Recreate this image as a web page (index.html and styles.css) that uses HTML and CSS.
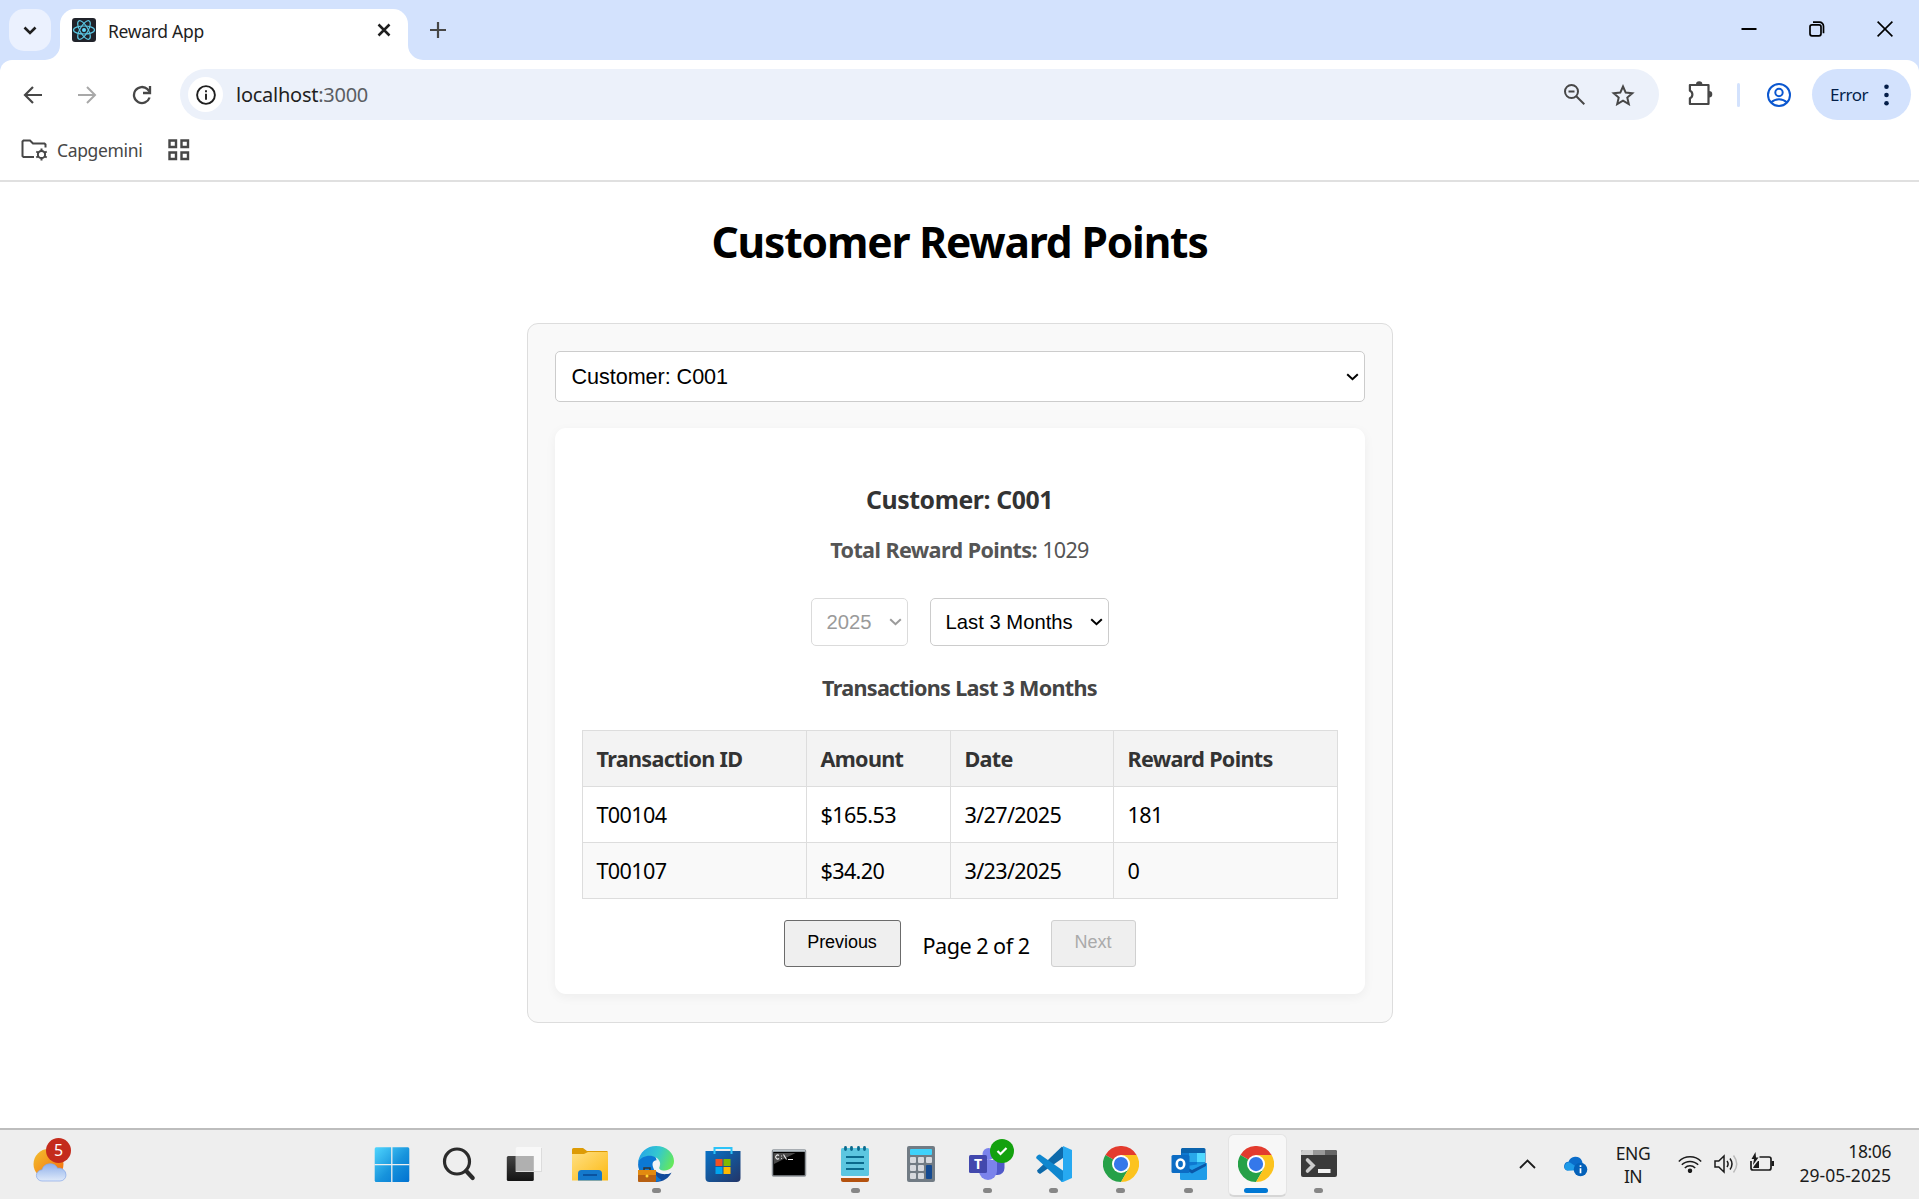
FILE: index.html
```
<!DOCTYPE html>
<html lang="en">
<head>
<meta charset="utf-8">
<title>Reward App</title>
<link rel="stylesheet" href="styles.css">
</head>
<body>
<div class="screen">
  <header class="browser">
    <div class="tabstrip">
      <div class="tab-search"><svg width="14" height="9" viewBox="0 0 14 9"><path d="M1.5 1.5 7 7l5.500-5.500" fill="none" stroke="#1f1f1f" stroke-width="2.600"/></svg></div>
      <svg class="tab-foot" width="15" height="15" viewBox="0 0 15 15"><path d="M15 0v15H0A15 15 0 0 0 15 0z" fill="#fff"/></svg>
      <div class="tab">
        <svg width="24" height="24" viewBox="0 0 24 24"><rect width="24" height="24" rx="3" fill="#20232a"/><g fill="none" stroke="#5bc8e4" stroke-width="1.200"><ellipse cx="12" cy="12" rx="10.500" ry="4"/><ellipse cx="12" cy="12" rx="10.500" ry="4" transform="rotate(60 12 12)"/><ellipse cx="12" cy="12" rx="10.500" ry="4" transform="rotate(120 12 12)"/></g><circle cx="12" cy="12" r="2" fill="#61dafb"/></svg>
        <span class="tab-title">Reward App</span>
        <svg width="14" height="14" viewBox="0 0 14 14"><path d="M1.500 1.500l11 11M12.500 1.500l-11 11" stroke="#1f1f1f" stroke-width="2.500"/></svg>
      </div>
      <svg class="tab-foot" width="15" height="15" viewBox="0 0 15 15"><path d="M0 0v15h15A15 15 0 0 1 0 0z" fill="#fff"/></svg>
      <svg class="new-tab" width="16" height="16" viewBox="0 0 16 16"><path d="M8 0v16M0 8h16" stroke="#474747" stroke-width="2.200"/></svg>
      <div class="window-buttons">
        <svg width="16" height="16" viewBox="0 0 16 16"><path d="M0.500 8h15" stroke="#000" stroke-width="2"/></svg>
        <svg width="16" height="16" viewBox="0 0 16 16" fill="none" stroke="#000" stroke-width="1.700"><rect x="1" y="3.800" width="11" height="11" rx="2"/><path d="M4 1.200h6.500a4 4 0 0 1 4 4v7"/></svg>
        <svg width="16" height="16" viewBox="0 0 16 16"><path d="M.6.6l14.800 14.800M15.400.6L.6 15.400" stroke="#000" stroke-width="1.600"/></svg>
      </div>
    </div>
    <div class="toolbar">
      <svg class="back" width="19" height="18" viewBox="0 0 19 18" fill="none" stroke="#474747" stroke-width="2.200"><path d="M19 9H2.500M10 1L2 9l8 8"/></svg>
      <svg class="forward" width="19" height="18" viewBox="0 0 19 18" fill="none" stroke="#a8a8a8" stroke-width="2"><path d="M0 9h16.500M9 1l8 8-8 8"/></svg>
      <svg class="reload" width="20" height="20" viewBox="0 0 20 20" fill="none" stroke="#474747" stroke-width="2.300"><path d="M17.600 12.500A8 8 0 1 1 15.500 4.200L17.500 6.500"/><path d="M18 1v7h-7"/></svg>
      <div class="omnibox">
        <div class="site-info"><svg width="20" height="20" viewBox="0 0 20 20"><circle cx="10" cy="10" r="8.900" fill="none" stroke="#1f1f1f" stroke-width="1.900"/><path d="M10 8.700v6M10 5.300v2" stroke="#1f1f1f" stroke-width="1.900"/></svg></div>
        <span class="url"><span class="host">localhost</span>:3000</span>
        <svg class="zoom-icon" width="21" height="21" viewBox="0 0 21 21" fill="none" stroke="#474747" stroke-width="2"><circle cx="7.500" cy="7.500" r="6.500"/><path d="M4.500 7.500h6M12.300 12.300l8 8"/></svg>
        <svg width="24" height="22" viewBox="0 0 24 22" fill="none" stroke="#474747" stroke-width="2"><path d="M12 2.500l2.700 6.100 6.600.6-5 4.400 1.500 6.500L12 16.700l-5.800 3.400 1.500-6.500-5-4.400 6.600-.6z"/></svg>
      </div>
      <svg class="extensions" width="25" height="25" viewBox="0 0 25 25"><path d="M4 4h16.500v19H1.900v-5.800a4 4 0 0 0 0-7.400V4z" fill="none" stroke="#474747" stroke-width="2.200" stroke-linejoin="round"/><path d="M8 3.500a3.200 3.200 0 0 1 6.400 0zM21 10a3.200 3.200 0 0 1 0 6.600z" fill="#474747"/></svg>
      <span class="divider"></span>
      <svg class="profile" width="24" height="24" viewBox="0 0 24 24" fill="none" stroke="#0b57d0" stroke-width="2"><circle cx="12" cy="12" r="11"/><circle cx="12" cy="9.500" r="3.700"/><path d="M4 19.500c4.500-4.300 11.500-4.300 16 0"/></svg>
      <div class="error-chip"><span>Error</span><svg width="5" height="22" viewBox="0 0 5 22" fill="#041e49"><circle cx="2.500" cy="2.700" r="2.300"/><circle cx="2.500" cy="11" r="2.300"/><circle cx="2.500" cy="19.300" r="2.300"/></svg></div>
    </div>
    <div class="bookmarks">
      <svg width="27" height="22" viewBox="0 0 27 22" fill="none" stroke="#474747" stroke-width="2"><path d="M13 18H2.500L1.500 17V2.500l1-1H9l3 3h11.500l1 1v3"/><circle cx="20.500" cy="15.500" r="3.600"/><path d="M20.500 9.500v2.500M20.500 19v2.500M15.300 12.500l2.200 1.300M23.500 17.200l2.200 1.300M15.300 18.500l2.200-1.300M23.500 13.800l2.200-1.300"/></svg>
      <span class="bookmark-name">Capgemini</span>
      <svg width="22" height="22" viewBox="0 0 22 22" fill="none" stroke="#474747" stroke-width="2.400"><path d="M1.500 1.500h6.500V8H1.500zM13.500 1.500H20V8h-6.500zM1.500 13.500h6.500V20H1.500zM13.500 13.500H20V20h-6.500z"/></svg>
    </div>
  </header>

  <main class="page">
    <h1>Customer Reward Points</h1>
    <section class="container">
      <div class="select customer-select"><span>Customer: C001</span><svg width="13" height="8" viewBox="0 0 13 8"><path d="M1.200 1.200l5.300 5 5.300-5" fill="none" stroke="currentColor" stroke-width="2"/></svg></div>
      <article class="card">
        <h3>Customer: C001</h3>
        <p class="total"><strong>Total Reward Points:</strong> <span class="num">1029</span></p>
        <div class="filters">
          <div class="select year disabled"><span>2025</span><svg width="13" height="8" viewBox="0 0 13 8"><path d="M1.200 1.200l5.300 5 5.300-5" fill="none" stroke="currentColor" stroke-width="2"/></svg></div>
          <div class="select range"><span>Last 3 Months</span><svg width="13" height="8" viewBox="0 0 13 8"><path d="M1.200 1.200l5.300 5 5.300-5" fill="none" stroke="currentColor" stroke-width="2"/></svg></div>
        </div>
        <h4>Transactions Last 3 Months</h4>
        <table>
          <colgroup><col class="c-id"><col class="c-amount"><col class="c-date"><col class="c-points"></colgroup>
          <thead><tr><th>Transaction ID</th><th>Amount</th><th>Date</th><th>Reward Points</th></tr></thead>
          <tbody>
            <tr><td>T00104</td><td>$165.53</td><td>3/27/2025</td><td>181</td></tr>
            <tr><td>T00107</td><td>$34.20</td><td>3/23/2025</td><td>0</td></tr>
          </tbody>
        </table>
        <div class="pagination">
          <button class="prev">Previous</button>
          <span>Page 2 of 2</span>
          <button class="next" disabled>Next</button>
        </div>
      </article>
    </section>
  </main>

  <footer class="taskbar">
    <div class="weather">
      <svg width="40" height="44" viewBox="0 0 40 44">
        <defs>
          <linearGradient id="sun" x1="0" y1="0" x2="1" y2="1"><stop offset="0" stop-color="#f2c12e"/><stop offset="1" stop-color="#f5680c"/></linearGradient>
          <linearGradient id="cloud" x1="0" y1="0" x2="0" y2="1"><stop offset="0" stop-color="#8fb0ea"/><stop offset="1" stop-color="#dfeafa"/></linearGradient>
        </defs>
        <circle cx="15.500" cy="26" r="15" fill="url(#sun)"/>
        <path d="M9 43a5.600 5.600 0 0 1 0-11.200 8.500 8.500 0 0 1 15.600-1.600A7 7 0 0 1 33 37a6 6 0 0 1-6 6z" fill="url(#cloud)" stroke="#86a8e8" stroke-width=".7"/>
      </svg>
      <span class="badge">5</span>
    </div>
    <nav class="apps">
      <div class="app"><svg width="36" height="36" viewBox="0 0 36 36"><defs><linearGradient id="win" x1="0" y1="0" x2="1" y2="1"><stop offset="0" stop-color="#4fd5fd"/><stop offset=".55" stop-color="#1793dc"/><stop offset="1" stop-color="#0072d1"/></linearGradient></defs><rect x=".7" y="1.300" width="34.600" height="34.600" rx="1.500" fill="url(#win)"/><path d="M17.800 1v35M.5 18.600h35" stroke="#eee" stroke-width="1.300"/></svg></div>
      <div class="app"><svg width="36" height="36" viewBox="-1.200 0 36 36" fill="none" stroke="#2b2b2b"><circle cx="15.800" cy="15.500" r="12.500" stroke-width="3.200"/><path d="M25 25l6.500 7" stroke-width="4.200" stroke-linecap="round"/></svg></div>
      <div class="app"><svg width="36" height="36" viewBox="-.8 0 36 36"><defs><linearGradient id="tv" x1="0" y1="0" x2="0" y2="1"><stop offset="0" stop-color="#444"/><stop offset="1" stop-color="#141414"/></linearGradient></defs><rect y="10" width="27" height="25" rx="1.500" fill="url(#tv)"/><rect x="9" y="1" width="26" height="25" rx="1.500" fill="#f8f8f8"/><path d="M9 10h18v16H9z" fill="#b0b0b0"/><path d="M9 25.500h26M34.700 2v24" stroke="#dcdcdc"/></svg></div>
      <div class="app"><svg width="36" height="36" viewBox="0 0 36 36"><defs><linearGradient id="fold" x1="0" y1="0" x2="1" y2="1"><stop offset="0" stop-color="#ffe083"/><stop offset="1" stop-color="#fcb912"/></linearGradient></defs><path d="M0 3.500Q0 2 1.500 2H11l4 3h20.500L36 20H0z" fill="#dd9b05"/><path d="M0 8h12l4-2h20v28.500H0z" fill="url(#fold)"/><path d="M6 34.500v-7a3.500 3.500 0 0 1 3.500-3.500h17a3.500 3.500 0 0 1 3.500 3.500v7z" fill="#1479cc"/><path d="M11 29h14" stroke="#0a53a0" stroke-width="2"/></svg></div>
      <div class="app"><svg width="36" height="36" viewBox="0 0 36 36"><defs><linearGradient id="edgeTop" x1="0" y1=".3" x2="1" y2=".6"><stop offset="0" stop-color="#25a5e8"/><stop offset=".5" stop-color="#34c8cf"/><stop offset="1" stop-color="#65e85a"/></linearGradient></defs><path d="M.5 18a17.800 17.800 0 0 0 17.500 18c7 0 13-4 15.500-9.500-4 2.500-10 2-14-1.500z" fill="#114a9b"/><path d="M.2 18C0 10 6 7.500 11 8c6 .6 8 4 7.500 8-5 4-3 13 5 18-13 6-23.500-5-23.300-16z" fill="#0c78d4"/><path d="M.2 16C1.500 6 9 0 18 0c11 0 18 7.500 18 15 0 6-4.500 9.500-9.500 9.500-4 0-6-1.500-5-3.500 1.300-2.500 1-7-3.500-9.500C12 8 3.500 10 .2 16z" fill="url(#edgeTop)"/><path d="M14.500 18c0-4 6.500-5.500 7-1 .3 2-1.500 3-.5 5.500 1.500 3.500 7 4 12.500 2-.5 4-8 4.500-12.500 2.500-4-1.800-6.500-5-6.500-9z" fill="#f4f5f6"/><rect y="24" width="18" height="12" rx="1" fill="#b76012"/><path d="M0 24h18v5H0z" fill="#e28a10"/><path d="M6 24v-2h6v2" fill="none" stroke="#333" stroke-width="1.500"/><circle cx="9" cy="30" r="1.500" fill="#ffd735"/></svg><i></i></div>
      <div class="app"><svg width="36" height="36" viewBox="0 0 36 36"><defs><linearGradient id="store" x1="0" y1="0" x2="1" y2="1"><stop offset="0" stop-color="#0872c6"/><stop offset="1" stop-color="#233567"/></linearGradient></defs><path d="M.5 5h35v27a4 4 0 0 1-4 4h-27a4 4 0 0 1-4-4z" fill="url(#store)"/><path d="M9.500 8V2h17v6" fill="none" stroke="#2cc3f8" stroke-width="2"/><path d="M10.500 13h7v7h-7z" fill="#f25022"/><path d="M18.500 13h7v7h-7z" fill="#7fba00"/><path d="M10.500 21h7v7h-7z" fill="#00a4ef"/><path d="M18.500 21h7v7h-7z" fill="#ffb900"/></svg></div>
      <div class="app"><svg width="36" height="36" viewBox="0 0 36 36"><rect x="1.500" y="4" width="33" height="26" rx="1" fill="#000" stroke="#8d9298" stroke-width="1.500"/><path d="M2 4.800h32" stroke="#b8c2c8" stroke-width="2"/><path d="M2.500 7h22L3 18z" fill="#4a4a4a"/><path d="M8 9.500a2 2 0 1 0 0 3M10 10h.8M10 12.500h.8M12.500 8.500l3 5M17 13.500h5" fill="none" stroke="#eee" stroke-width="1.100"/></svg></div>
      <div class="app"><svg width="36" height="36" viewBox="0 0 36 36"><path d="M4 31h28v3a2 2 0 0 1-2 2H6a2 2 0 0 1-2-2z" fill="#b4520e"/><path d="M4 29h28v3H4z" fill="#f4f4f4"/><rect x="4" y="2" width="28" height="28" rx="1.500" fill="#5cc6e0"/><path d="M9 11h18M9 17h18M9 23h18" stroke="#0b6a8d" stroke-width="2"/><path d="M8.500 1.500v2M14.500 1.500v2M21.500 1.500v2M27.500 1.500v2" stroke="#0b6a8d" stroke-width="2.800" stroke-linecap="round"/></svg><i></i></div>
      <div class="app"><svg width="36" height="36" viewBox="0 0 36 36"><rect x="4" width="28" height="36" rx="2" fill="#717b84"/><rect x="7" y="3" width="22" height="6" rx="1" fill="#3fd2fb"/><g fill="#d6d9de"><rect x="7" y="11" width="6" height="6" rx="1"/><rect x="15" y="11" width="6" height="6" rx="1"/><rect x="23" y="11" width="6" height="6" rx="1"/><rect x="7" y="19" width="6" height="6" rx="1"/><rect x="15" y="19" width="6" height="6" rx="1"/><rect x="7" y="27" width="6" height="6" rx="1"/><rect x="15" y="27" width="6" height="6" rx="1"/></g><rect x="23" y="19" width="6" height="14" rx="1" fill="#144a91"/></svg></div>
      <div class="app"><svg width="36" height="36" viewBox="0 0 36 36"><circle cx="29" cy="11" r="5" fill="#5059c9"/><path d="M22 15h13.500v7a7 7 0 0 1-7 7H22z" fill="#5059c9"/><circle cx="19.500" cy="8" r="6" fill="#7b83eb"/><path d="M10 14h18v11a9 9 0 0 1-18 0z" fill="#7b83eb"/><rect y="9" width="18" height="18" rx="1.500" fill="#4248ad"/><text x="9" y="23" text-anchor="middle" font-family="Noto Sans, sans-serif" font-weight="700" font-size="14" fill="#fff">T</text></svg><svg class="presence" width="24" height="24" viewBox="0 0 24 24"><circle cx="12" cy="12" r="12" fill="#13a10e"/><path d="M7.500 12l3 3 6-6" fill="none" stroke="#fff" stroke-width="2.200"/></svg><i></i></div>
      <div class="app"><svg width="36" height="36" viewBox="0 0 36 36"><path d="M1 24.500L26 .5l3 3v7L4 28q-3-1.500-3-3.500z" fill="#0d69aa"/><path d="M4 8.500q-3 0-4 3.500l26 24 3-3v-7z" fill="#0f87cf"/><path d="M27 0l9 4v28l-9 4q-1 .5-2-1l2-1z" fill="#27a9f1"/></svg><i></i></div>
      <div class="app wide"><svg width="36" height="36" viewBox="0 0 48 48"><path d="M24 24L3.200 12A24 24 0 0 1 44.800 12z" fill="#e33b2e"/><path d="M24 24L3.200 12A24 24 0 0 0 24 48L34.400 30z" fill="#26a148"/><path d="M24 12h20.800A24 24 0 0 1 24 48l10.400-18z" fill="#fcc31e"/><circle cx="24" cy="24" r="12" fill="#fff"/><circle cx="24" cy="24" r="9.500" fill="#3578ea"/></svg><i></i></div>
      <div class="app wide"><svg width="36" height="36" viewBox="0 0 36 36"><path d="M11 2h22q1.500 0 1.500 1.500V28H10V3z" fill="#0a63ad"/><path d="M10.500 7H18v9h-7.500zM18 16h8v8h-8z" fill="#0e78d0"/><path d="M18 7h8v9h-8z" fill="#28a8ea"/><path d="M26 7h8v9h-8z" fill="#50d9ff"/><path d="M26 16h8v8h-8z" fill="#1793db"/><path d="M9 21l27-4v15.500q0 1.500-1.500 1.500h-24Q9 34 9 32.500z" fill="#1f9ce8"/><path d="M35 17v3L21 27.500 10 21v-3l11 6z" fill="#0a57a8"/><rect x=".5" y="9" width="18" height="18" rx="1.500" fill="#0c6cc4"/><ellipse cx="9.500" cy="18" rx="3.700" ry="4.500" fill="none" stroke="#fff" stroke-width="2.600"/></svg><i></i></div>
      <div class="app active"><svg width="36" height="36" viewBox="0 0 48 48"><path d="M24 24L3.200 12A24 24 0 0 1 44.800 12z" fill="#e33b2e"/><path d="M24 24L3.200 12A24 24 0 0 0 24 48L34.400 30z" fill="#26a148"/><path d="M24 12h20.800A24 24 0 0 1 24 48l10.400-18z" fill="#fcc31e"/><circle cx="24" cy="24" r="12" fill="#fff"/><circle cx="24" cy="24" r="9.500" fill="#3578ea"/></svg><i></i></div>
      <div class="app narrow"><svg width="36" height="36" viewBox="0 0 36 36"><rect y="4" width="36" height="27" rx="2" fill="#3a3a3a"/><path d="M2 4h10v5H0V6q0-2 2-2z" fill="#ccc"/><path d="M12 4h12v5H12z" fill="#999"/><path d="M24 4h10q2 0 2 2v3H24z" fill="#666"/><path d="M6.500 14l5.500 5.500L6.500 25" fill="none" stroke="#ccc" stroke-width="3.600" stroke-linecap="round"/><path d="M17 23h12.500v4H17z" fill="#f2f2f2"/></svg><i></i></div>
    </nav>
    <div class="tray">
      <svg class="chevron" width="17" height="10" viewBox="0 0 17 10"><path d="M1 9l7.500-7.500L16 9" fill="none" stroke="#1b1b1b" stroke-width="1.800"/></svg>
      <svg class="onedrive" width="25" height="21" viewBox="0 0 25 21"><path d="M4 14.500a4.500 4.500 0 0 1 1.500-8.700A7.300 7.300 0 0 1 19 5l2 8z" fill="#0a6cc9"/><path d="M4 14.500a4.300 4.300 0 0 1 3-8l12 8z" fill="#1e9be8"/><circle cx="17.500" cy="13.500" r="6.800" fill="#0461b9"/><path d="M17.500 12.300v5M17.500 9.300v1.800" stroke="#fff" stroke-width="1.700"/></svg>
      <div class="lang"><span>ENG</span><span>IN</span></div>
      <svg class="wifi" width="24" height="18" viewBox="0 0 24 18" fill="none" stroke="#1b1b1b" stroke-width="1.500"><path d="M.8 6.500a15.800 15.800 0 0 1 22.400 0M3.800 9.800a11.600 11.600 0 0 1 16.400 0M6.800 13a7.400 7.400 0 0 1 10.400 0"/><circle cx="12" cy="15.800" r="1.500" fill="#1b1b1b"/></svg>
      <svg class="volume" width="24" height="20" viewBox="0 0 24 20" fill="none" stroke="#1b1b1b" stroke-width="1.500"><path d="M1 7h3.800L10 2v16l-5.200-5H1z"/><path d="M13 7q2.200 3 0 6M16 4.500q4 5.500 0 11"/><path d="M19.500 1.500q6.500 8.500 0 17" stroke="#bbb"/></svg>
      <svg class="battery" width="25" height="21" viewBox="0 0 25 21" fill="none" stroke="#1b1b1b" stroke-width="1.700"><path d="M9.500 5H19a2 2 0 0 1 2 2v9a2 2 0 0 1-2 2H3a2 2 0 0 1-2-2V9"/><path d="M21.500 9h2.500v5h-2.500z" fill="#1b1b1b" stroke="none"/><path d="M5.500 0L1.500 7H4l-1 6 5.500-7.500H6z" fill="#1b1b1b" stroke="none"/><path d="M3 16l1-2 4-5h1v7z" fill="#1b1b1b" stroke="none"/></svg>
      <div class="clock"><span class="time">18:06</span><span>29-05-2025</span></div>
    </div>
  </footer>
</div>
</body>
</html>
```

FILE: styles.css
```
* { box-sizing: border-box; }
body { margin: 0; background: #fff; font-family: "Noto Sans", sans-serif; }
svg { display: block; flex: none; }
.screen { width: 1919px; height: 1199px; display: flex; flex-direction: column; overflow: hidden; }

/* Browser chrome */
.browser { height: 182px; background: #d3e2fd; border-bottom: 2px solid #e0e0e0; flex: none; }
.tabstrip { height: 60px; display: flex; padding-left: 9px; }
.tab-search { width: 42px; height: 42px; margin-top: 9px; margin-right: -6px; border-radius: 15px; background: #ebf1fe; display: flex; align-items: center; justify-content: center; }
.tab-foot { align-self: flex-end; }
.tab { width: 348px; margin-top: 9px; background: #fff; border-radius: 15px 15px 0 0; display: flex; align-items: flex-start; padding: 9px 17px 0 12px; }
.tab-title { margin: 0 auto 0 12px; font-size: 17.500px; line-height: 26px; letter-spacing: -.300px; color: #1f1f1f; }
.tab > svg:last-child { margin-top: 5px; }
.new-tab { margin: 22px 0 0 7px; }
.window-buttons { margin: 21px 26px 0 auto; display: flex; gap: 52px; }
.toolbar { height: 69px; background: #fff; border-radius: 12px 12px 0 0; display: flex; align-items: center; padding: 0 8px 0 23px; }
.forward { margin-left: 36px; }
.reload { margin-left: 35px; }
.omnibox { width: 1479px; height: 51px; margin-left: 28px; border-radius: 26px; background: #ecf1fa; display: flex; align-items: center; padding: 0 24px 0 8px; }
.site-info { width: 35px; height: 35px; border-radius: 50%; background: #fff; display: flex; align-items: center; justify-content: center; }
.url { margin: -1px auto 0 13px; font-size: 20px; letter-spacing: -.260px; color: #5b5e63; }
.host { color: #1f1f1f; }
.zoom-icon { margin-right: 26px; }
.extensions { margin-left: 29px; margin-top: -3px; }
.divider { width: 3px; height: 24px; margin-left: 24px; border-radius: 2px; background: #d3e2fd; }
.profile { margin-left: 27px; }
.error-chip { width: 99px; height: 51px; margin-left: auto; border-radius: 26px; background: #d3e2fd; color: #041e49; font-size: 17px; letter-spacing: -.500px; display: flex; align-items: center; justify-content: space-between; padding: 0 22px 0 18px; }
.error-chip span { margin-top: -1px; }
.bookmarks { height: 51px; background: #fff; display: flex; align-items: center; padding: 0 0 9px 21px; }
.bookmark-name { margin: -1px 26px 0 9px; font-size: 17.500px; letter-spacing: -.350px; color: #474747; width: 85px; }

/* Reward page */
.page { height: 946px; flex: none; display: flex; flex-direction: column; align-items: center; }
h1 { margin: 30px 0 51px; font-size: 42.500px; line-height: 60px; letter-spacing: -1.150px; }
.container { width: 866px; height: 700px; padding: 27px; border: 1px solid #ddd; border-radius: 11px; background: #f9f9f9; }
.select { display: flex; align-items: center; justify-content: space-between; border: 1px solid #ccc; border-radius: 5px; background: #fff; font: 21.600px "Liberation Sans", sans-serif; color: #000; }
.customer-select { height: 51px; padding: 0 5px 0 16px; letter-spacing: -.050px; }
.card { height: 566px; margin-top: 26px; padding: 54px 27px 0; border-radius: 11px; background: #fff; box-shadow: 0 3px 11px rgba(0,0,0,.05); text-align: center; }
h3 { margin: 0; font-size: 24.800px; line-height: 34px; letter-spacing: -.400px; color: #333; }
.total { margin: 19px 0 33px; font-size: 21.600px; line-height: 30px; color: #555; letter-spacing: -.650px; word-spacing: .300px; }
.total .num { letter-spacing: -.700px; }
.filters { display: flex; justify-content: center; gap: 22px; }
.filters .select { height: 48px; padding: 0 5px 0 15px; font-size: 20.250px; }
.year { width: 97px; }
.year.disabled { opacity: .7; color: #707070; }
.range { width: 179px; }
h4 { margin: 27px 0; font-size: 21.600px; line-height: 30px; letter-spacing: -.700px; color: #444; }
table { width: 756px; border-collapse: collapse; table-layout: fixed; font-size: 21.600px; }
.c-id { width: 224px; } .c-amount { width: 144px; } .c-date { width: 163px; } .c-points { width: 224px; }
th, td { height: 56px; padding: 0 0 0 14px; border: 1px solid #ddd; text-align: left; line-height: 30px; }
th { background: #f3f3f3; color: #333; letter-spacing: -.700px; }
td { letter-spacing: -.650px; color: #000; }
tbody tr:nth-child(even) { background: #f9f9f9; }
.pagination { display: flex; align-items: center; justify-content: center; margin-top: 21px; height: 47px; font-size: 21.600px; letter-spacing: -.520px; }
.pagination span { margin: 4px 21px 0 22px; width: 107px; white-space: nowrap; }
.pagination button { height: 47px; padding: 0 0 3px; border: 1px solid #6b6b6b; border-radius: 3px; background: #efefef; font: 18px "Liberation Sans", sans-serif; letter-spacing: -.050px; color: #000; }
.prev { width: 117px; }
.pagination .next { width: 85px; border-color: #d0d0d0; color: #aaa; }

/* Windows taskbar */
.taskbar { height: 71px; flex: none; border-top: 2px solid #bdbdbd; background: #eee; display: flex; }
.weather { position: relative; width: 358.600px; flex: none; padding: 8px 0 0 33px; }
.badge { position: absolute; left: 46px; top: 8px; width: 25px; height: 25px; border-radius: 50%; background: #c42b1c; color: #fff; font-size: 16px; line-height: 24px; text-align: center; }
.apps { display: flex; }
.app { position: relative; width: 66.200px; height: 69px; padding-top: 16px; display: flex; flex-direction: column; align-items: center; }
.app.wide { width: 68px; }
.app.narrow { width: 60px; }
.app > svg { position: relative; }
.app i { width: 9px; height: 5px; margin-top: 6px; border-radius: 3px; background: #868686; position: relative; }
.app.active::before { content: ""; position: absolute; left: 5px; top: 4px; width: 57px; height: 60px; border: 1px solid #e4e4e4; border-bottom: 2px solid #d6d6d6; border-radius: 6px; background: #f7f7f7; }
.active i { width: 24px; background: #0078d4; }
.app .presence { position: absolute; left: 36px; top: 9px; }
.tray { margin-left: auto; display: flex; align-items: flex-start; padding-right: 28px; color: #1b1b1b; font-size: 17.500px; letter-spacing: .020px; line-height: 23px; }
.chevron { margin-top: 29px; }
.onedrive { margin: 26px 0 0 27px; }
.lang { width: 50px; margin: 12px 0 0 20px; display: flex; flex-direction: column; align-items: center; letter-spacing: -.500px; }
.wifi { margin: 25px 0 0 20px; }
.volume { margin: 24px 0 0 12px; }
.battery { margin: 22px 0 0 12px; }
.clock { width: 98px; margin: 9px 0 0 18px; display: flex; flex-direction: column; align-items: flex-end; line-height: 24px; white-space: nowrap; }
.time { letter-spacing: -.400px; }
```
